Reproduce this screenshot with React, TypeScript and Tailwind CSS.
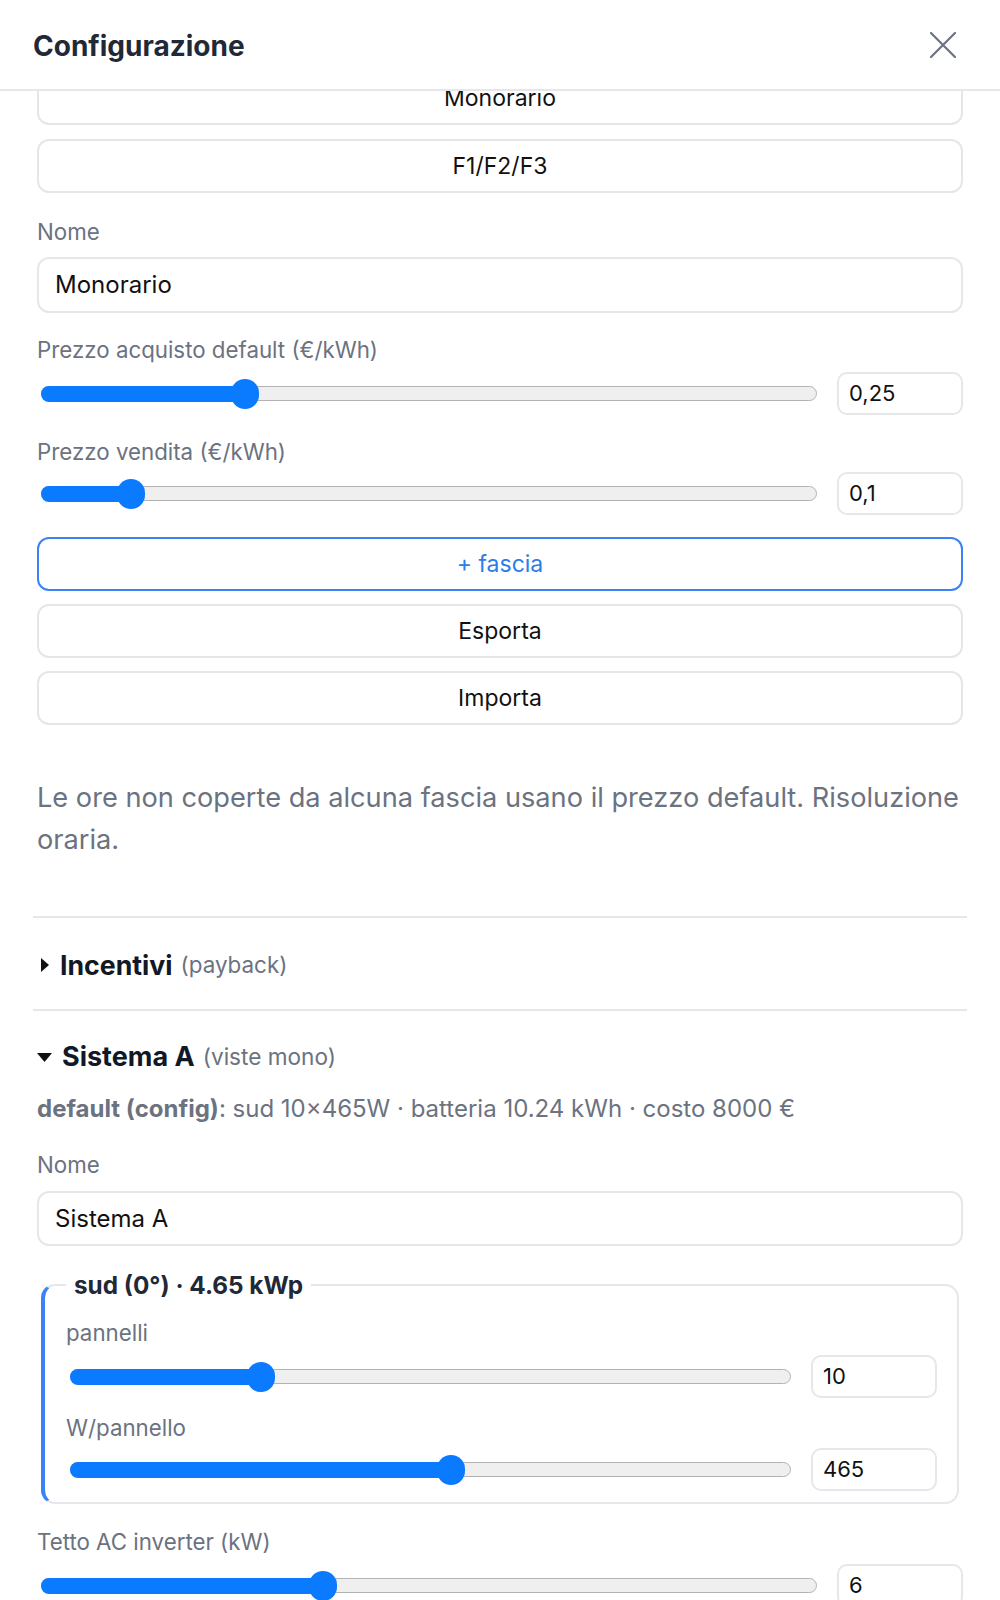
import React from "react";

function Slider({ pct }: { pct: number }) {
  return (
    <div className="relative mx-[4px] h-[15px] flex-1 rounded-full border-[1.5px] border-[#b3b3b3] bg-[#efefef]">
      <div
        className="absolute left-[-1.5px] top-[-1.5px] bottom-[-1.5px] rounded-full bg-[#0a7aff]"
        style={{ width: `calc(${pct}% + 1.5px)` }}
      />
      <div
        className="absolute top-1/2 h-[30px] w-[28px] -translate-x-1/2 -translate-y-1/2 rounded-full bg-[#0a7aff]"
        style={{ left: `${pct}%` }}
      />
    </div>
  );
}

function SliderRow({ pct, value, className }: { pct: number; value: string; className: string }) {
  return (
    <div className={`flex h-[43px] items-center gap-[16px] ${className}`}>
      <Slider pct={pct} />
      <div className="flex h-full w-[126px] items-center rounded-[10px] border-2 border-[#e5e7eb] bg-white px-[10px] text-[22px] text-[#111]">
        {value}
      </div>
    </div>
  );
}

function Label({ children, className }: { children: React.ReactNode; className: string }) {
  return <div className={`text-[22.3px] leading-[30px] text-[#6b7280] ${className}`}>{children}</div>;
}

function Btn({ children, className, blue }: { children: React.ReactNode; className: string; blue?: boolean }) {
  return (
    <button
      className={`flex h-[54px] w-full items-center justify-center rounded-[12px] border-2 bg-white text-[23px] ${
        blue ? "border-[#3b82f6] text-[#2b7de9]" : "border-[#e6e6e6] text-[#111]"
      } ${className}`}
    >
      {children}
    </button>
  );
}

export default function App() {
  return (
    <div className="flex h-[1600px] w-[1000px] flex-col overflow-hidden bg-white font-[family-name:Inter,sans-serif]">
      <header className="flex h-[91px] shrink-0 items-center justify-between border-b-2 border-[#e5e7eb] pl-[33px] pr-[44px]">
        <h1 className="mt-[2px] text-[28px] font-bold text-[#1f2937]">Configurazione</h1>
        <svg width="26" height="26" viewBox="0 0 26 26" className="text-[#6b7280]">
          <path d="M1 1 L25 25 M25 1 L1 25" stroke="currentColor" strokeWidth="2.2" strokeLinecap="round" />
        </svg>
      </header>

      <div className="flex-1 overflow-hidden px-[37px]">
        <Btn className="mt-[-20px]">Monorario</Btn>
        <Btn className="mt-[14px]">F1/F2/F3</Btn>

        <Label className="mt-[24px]">Nome</Label>
        <div className="mt-[10px] flex h-[56px] items-center rounded-[12px] border-2 border-[#e5e7eb] px-[16px] text-[24px] text-[#111]">
          Monorario
        </div>

        <Label className="mt-[22px]">Prezzo acquisto default (€/kWh)</Label>
        <SliderRow className="mt-[7px]" pct={26.2} value="0,25" />

        <Label className="mt-[22px]">Prezzo vendita (€/kWh)</Label>
        <SliderRow className="mt-[5px]" pct={11.5} value="0,1" />

        <Btn blue className="mt-[22px]">+ fascia</Btn>
        <Btn className="mt-[13px]">Esporta</Btn>
        <Btn className="mt-[13px]">Importa</Btn>

        <p className="mt-[52px] text-[27.2px] leading-[42px] text-[#6b7280]">
          Le ore non coperte da alcuna fascia usano il prezzo default. Risoluzione oraria.
        </p>

        <div className="mx-[-4px] mt-[55px] h-[2px] bg-[#e5e7eb]" />

        <div className="mt-[29px] flex h-[36px] items-center">
          <svg width="8" height="14" viewBox="0 0 8 14" className="ml-[4px] mr-[11px]">
            <polygon points="0,0 8,7 0,14" fill="#111" />
          </svg>
          <span className="text-[26.7px] font-bold text-[#111827]">Incentivi</span>
          <span className="ml-[8px] text-[22.4px] text-[#6b7280]">(payback)</span>
        </div>

        <div className="mx-[-4px] mt-[26px] h-[2px] bg-[#e5e7eb]" />

        <div className="mt-[28px] flex h-[36px] items-center">
          <svg width="15" height="9" viewBox="0 0 15 9" className="mr-[10px]">
            <polygon points="0,0 15,0 7.5,9" fill="#111" />
          </svg>
          <span className="text-[27px] font-bold text-[#111827]">Sistema A</span>
          <span className="ml-[8px] text-[22.6px] text-[#6b7280]">(viste mono)</span>
        </div>

        <div className="mt-[18px] text-[24px] leading-[32px] text-[#6b7280]">
          <span className="font-bold">default (config)</span>: sud 10×465W · batteria 10.24 kWh · costo 8000 €
        </div>

        <Label className="mt-[25px]">Nome</Label>
        <div className="mt-[11px] flex h-[55px] items-center rounded-[12px] border-2 border-[#e5e7eb] px-[16px] text-[24px] text-[#111]">
          Sistema A
        </div>

        <fieldset className="mx-[4px] mt-[23px] rounded-[14px] border-2 border-l-4 border-[#e5e7eb] border-l-[#3b82f6] pb-[11px] pl-[21px] pr-[20px]">
          <legend className="px-[8px] text-[24.3px] font-bold leading-[32px] text-[#1f2937]">sud (0°) · 4.65 kWp</legend>
          <Label className="mt-[17px]">pannelli</Label>
          <SliderRow className="mt-[7px]" pct={26.4} value="10" />
          <Label className="mt-[15px]">W/pannello</Label>
          <SliderRow className="mt-[5px]" pct={52.9} value="465" />
        </fieldset>

        <Label className="mt-[23px]">Tetto AC inverter (kW)</Label>
        <SliderRow className="mt-[7px]" pct={36.3} value="6" />
      </div>
    </div>
  );
}
